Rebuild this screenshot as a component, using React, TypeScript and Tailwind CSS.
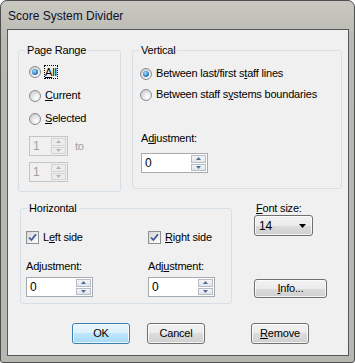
import React from "react";

const font = { fontFamily: '"Liberation Sans", Arial, sans-serif' };

function U({ children }: { children: React.ReactNode }) {
  return <span className="underline underline-offset-[1px]">{children}</span>;
}

function Radio({ checked = false }: { checked?: boolean }) {
  return (
    <span className="flex h-[12px] w-[12px] shrink-0 items-center justify-center rounded-full border border-[#8a8c8f] bg-[radial-gradient(circle_at_65%_70%,#ffffff_5%,#c9cbce_85%)]">
      {checked && (
        <span className="h-[6px] w-[6px] rounded-full bg-[radial-gradient(circle_at_40%_35%,#a6e0ff,#2d7bc0_60%,#134a86)]" />
      )}
    </span>
  );
}

function Check() {
  return (
    <span className="flex h-[13px] w-[13px] shrink-0 items-center justify-center border border-[#8e8f8f] bg-[linear-gradient(135deg,#d6d6d6,#ffffff)]">
      <svg width="9" height="9" viewBox="0 0 9 9">
        <path d="M1 4.5 L3.4 7 L8 1.2" fill="none" stroke="#3b5797" strokeWidth="1.8" />
      </svg>
    </span>
  );
}

function Arrow({ up, color }: { up: boolean; color: string }) {
  return (
    <svg width="5" height="3" viewBox="0 0 5 3">
      <path d={up ? "M0 3 L2.5 0 L5 3 Z" : "M0 0 L5 0 L2.5 3 Z"} fill={color} />
    </svg>
  );
}

function Spin({ value, w, disabled = false }: { value: string; w: string; disabled?: boolean }) {
  const arrow = disabled ? "#b0b4ba" : "#4c6a9a";
  return (
    <div
      className={`flex h-[20px] ${w} border ${
        disabled ? "border-[#c4c4c4] bg-[#f0f0f0] text-[#a0a0a0]" : "border-[#a6a9ae] bg-white text-black"
      }`}
    >
      <span className="flex-1 pl-[3px] text-[12px] leading-[18px]">{value}</span>
      <div className="flex w-[17px] flex-col gap-[1px] p-[1px]">
        <span
          className={`flex flex-1 items-center justify-center border ${
            disabled ? "border-[#d4d4d4] bg-[#ececec]" : "border-[#b7bcc4] bg-[linear-gradient(#f4f5f7,#e2e5ea)]"
          }`}
        >
          <Arrow up color={arrow} />
        </span>
        <span
          className={`flex flex-1 items-center justify-center border ${
            disabled ? "border-[#d4d4d4] bg-[#ececec]" : "border-[#b7bcc4] bg-[linear-gradient(#f4f5f7,#e2e5ea)]"
          }`}
        >
          <Arrow up={false} color={arrow} />
        </span>
      </div>
    </div>
  );
}

function Btn({ children, primary = false, w = "w-[58px]", h = "h-[21px]" }: { children: React.ReactNode; primary?: boolean; w?: string; h?: string }) {
  return (
    <div
      className={`flex ${w} ${h} items-center justify-center rounded-[3px] border shadow-[inset_0_0_0_1px_rgba(255,255,255,0.75)] ${
        primary
          ? "border-[#3c7fb1] bg-[linear-gradient(180deg,#eaf6fd_0%,#d9f0fc_50%,#bee6fd_50%,#a7d9f5_100%)]"
          : "border-[#707070] bg-[linear-gradient(180deg,#f2f2f2_0%,#ebebeb_50%,#dddddd_50%,#cfcfcf_100%)]"
      }`}
    >
      {children}
    </div>
  );
}

export default function App() {
  return (
    <div
      style={font}
      className="h-[363px] w-[355px] overflow-hidden rounded-t-[7px] rounded-b-[3px] border border-[#4e4f50] bg-[linear-gradient(180deg,#c9c9c2,#b9b9b1_40px,#b7b7af)] pl-[6px] pr-[5px] text-[11px] tracking-[-0.2px] text-black"
    >
      <div className="flex h-[28px] items-center pl-[1px] pt-[1px] text-[12px] tracking-normal text-[#10102a]">
        Score System Divider
      </div>

      <div className="flex h-[327px] flex-col border border-[#55585c] bg-[#f0f0f0]">
        {/* top row */}
        <div className="flex pl-[10px] pt-[14px]">
          <fieldset className="h-[148px] w-[103px] rounded-[3px] border border-[#d5dfe5]">
            <legend className="ml-[6px] px-[2px] leading-[13px]">Page Range</legend>
            <div className="flex flex-col gap-[11px] pl-[10px] pt-[8px]">
              <div className="flex h-[13px] items-center gap-[4px]">
                <Radio checked />
                <span className="outline-1 outline-dotted outline-black leading-[12px]">
                  <U>A</U>ll
                </span>
              </div>
              <div className="flex h-[13px] items-center gap-[4px]">
                <Radio />
                <span>
                  <U>C</U>urrent
                </span>
              </div>
              <div className="-mt-[1px] flex h-[13px] items-center gap-[4px]">
                <Radio />
                <span>
                  <U>S</U>elected
                </span>
              </div>
            </div>
            <div className="flex flex-col gap-[6px] pl-[10px] pt-[11px]">
              <div className="flex items-center gap-[7px]">
                <Spin value="1" w="w-[39px]" disabled />
                <span className="text-[#a0a0a0]">to</span>
              </div>
              <Spin value="1" w="w-[39px]" disabled />
            </div>
          </fieldset>

          <fieldset className="ml-[11px] h-[145px] w-[210px] rounded-[3px] border border-[#d5dfe5]">
            <legend className="ml-[6px] px-[2px] leading-[13px]">Vertical</legend>
            <div className="flex flex-col gap-[8px] pl-[7px] pt-[10px]">
              <div className="flex h-[13px] items-center gap-[4px]">
                <Radio checked />
                <span>
                  Between last/first s<U>t</U>aff lines
                </span>
              </div>
              <div className="flex h-[13px] items-center gap-[4px]">
                <Radio />
                <span>
                  Between staff s<U>y</U>stems boundaries
                </span>
              </div>
            </div>
            <div className="pl-[8px] pt-[31px] leading-[13px]">
              A<U>d</U>justment:
            </div>
            <div className="pl-[8px] pt-[8px]">
              <Spin value="0" w="w-[67px]" />
            </div>
          </fieldset>
        </div>

        {/* middle row */}
        <div className="flex pt-[10px]">
          <fieldset className="ml-[12px] h-[102px] w-[212px] rounded-[3px] border border-[#d5dfe5]">
            <legend className="ml-[6px] px-[2px] leading-[13px]">Horizontal</legend>
            <div className="grid grid-cols-[122px_1fr] pl-[5px] pt-[16px]">
              <div className="flex flex-col">
                <div className="flex h-[13px] items-center gap-[4px]">
                  <Check />
                  <span>
                    L<U>e</U>ft side
                  </span>
                </div>
                <div className="pt-[16px] leading-[13px]">Adjustment:</div>
                <div className="pt-[4px]">
                  <Spin value="0" w="w-[67px]" />
                </div>
              </div>
              <div className="flex flex-col">
                <div className="flex h-[13px] items-center gap-[4px]">
                  <Check />
                  <span>
                    <U>R</U>ight side
                  </span>
                </div>
                <div className="pt-[16px] leading-[13px]">
                  Adj<U>u</U>stment:
                </div>
                <div className="pt-[4px]">
                  <Spin value="0" w="w-[67px]" />
                </div>
              </div>
            </div>
          </fieldset>

          <div className="ml-[22px] flex flex-col">
            <div className="pl-[2px] leading-[13px]">
              <U>F</U>ont size:
            </div>
            <div className="flex h-[21px] w-[59px] items-center justify-between rounded-[3px] border border-[#707070] bg-[linear-gradient(180deg,#f2f2f2_0%,#ebebeb_50%,#dddddd_50%,#cfcfcf_100%)] pl-[4px] pr-[6px] text-[12px] shadow-[inset_0_0_0_1px_rgba(255,255,255,0.75)]">
              <span>14</span>
              <svg width="7" height="4" viewBox="0 0 7 4">
                <path d="M0 0 L7 0 L3.5 4 Z" fill="#000" />
              </svg>
            </div>
            <div className="mt-[43px]">
              <Btn w="w-[73px]" h="h-[19px]">
                <span>
                  <U>I</U>nfo...
                </span>
              </Btn>
            </div>
          </div>
        </div>

        {/* buttons */}
        <div className="flex pl-[64px] pt-[19px]">
          <Btn primary>OK</Btn>
          <div className="ml-[17px]">
            <Btn>Cancel</Btn>
          </div>
          <div className="ml-[46px]">
            <Btn>
              <span>
                <U>R</U>emove
              </span>
            </Btn>
          </div>
        </div>
      </div>
    </div>
  );
}
